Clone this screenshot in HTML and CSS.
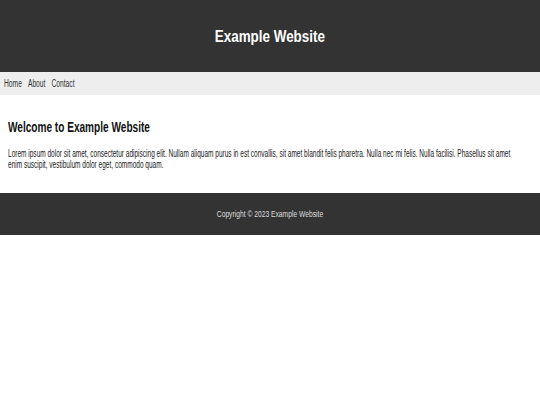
FILE: index.html
```html
<!DOCTYPE html>
<html lang="en">
<head>
<meta charset="utf-8">
<title>Example Website</title>
<link rel="stylesheet" href="styles.css">
</head>
<body>
<header class="site-header">
  <h1 class="site-title">Example Website</h1>
</header>
<nav class="site-nav">
  <div class="nav-links">
    <a href="#" class="nav-link">Home</a>
    <a href="#" class="nav-link">About</a>
    <a href="#" class="nav-link">Contact</a>
  </div>
</nav>
<main class="content">
  <h2 class="content-title">Welcome to Example Website</h2>
  <p class="content-text">Lorem ipsum dolor sit amet, consectetur adipiscing elit. Nullam aliquam purus in est convallis, sit amet blandit felis pharetra. Nulla nec mi felis. Nulla facilisi. Phasellus sit amet enim suscipit, vestibulum dolor eget, commodo quam.</p>
</main>
<footer class="site-footer">
  <p class="footer-text">Copyright &copy; 2023 Example Website</p>
</footer>
</body>
</html>
```
FILE: styles.css
```css
* { box-sizing: border-box; }
html, body { margin: 0; padding: 0; background: #fff; }
body {
  font-family: "Liberation Sans", Arial, sans-serif;
  color: #222;
  overflow-x: hidden;
}
.site-header {
  background: #333;
  color: #fff;
  text-align: center;
  padding: 27px 0 25px;
  font-size: 16.8px;
  line-height: 20px;
}
.site-title {
  display: inline-block;
  vertical-align: top;
  margin: 0;
  font-size: 16.8px;
  line-height: 20px;
  font-weight: bold;
  transform: scaleX(0.8);
}
.site-nav {
  background: #eee;
  padding: 5.5px 4px;
  overflow: hidden;
}
.nav-links {
  display: flex;
  gap: 9px;
  font-size: 10px;
  line-height: 12px;
  transform: scaleX(0.67);
  transform-origin: 0 0;
}
.nav-link {
  color: #333;
  text-decoration: none;
}
.content {
  padding: 23.5px 8px 22.2px;
  overflow: hidden;
}
.content-title {
  margin: 0 0 13.3px;
  font-size: 14px;
  line-height: 16px;
  font-weight: bold;
  color: #111;
  transform: scaleX(0.72);
  transform-origin: 0 0;
  white-space: nowrap;
}
.content-text {
  margin: 0;
  width: 785px;
  font-size: 10px;
  line-height: 11.5px;
  color: #222;
  transform: scaleX(0.652);
  transform-origin: 0 0;
}
.site-footer {
  background: #333;
  color: #ddd;
  text-align: center;
  padding: 15px 0;
  font-size: 9.6px;
  line-height: 12px;
}
.footer-text {
  display: inline-block;
  vertical-align: top;
  margin: 0;
  font-size: 9.6px;
  line-height: 12px;
  transform: scaleX(0.7);
}
```
